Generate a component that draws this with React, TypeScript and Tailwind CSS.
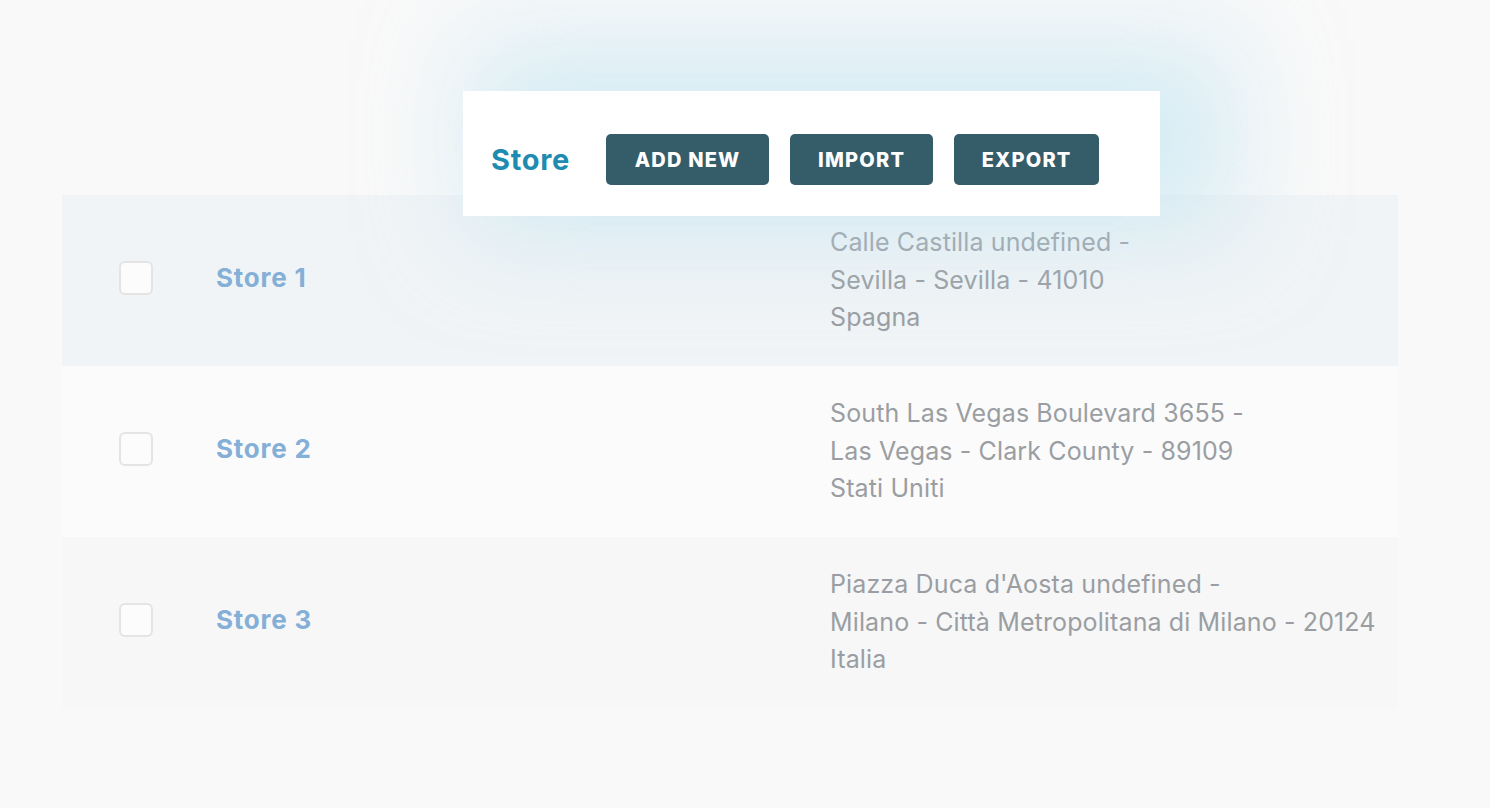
import React from "react";

const rows = [
  {
    name: "Store 1",
    lines: ["Calle Castilla undefined -", "Sevilla - Sevilla - 41010", "Spagna"],
    bg: "bg-[#f1f4f6]",
  },
  {
    name: "Store 2",
    lines: ["South Las Vegas Boulevard 3655 -", "Las Vegas - Clark County - 89109", "Stati Uniti"],
    bg: "bg-[#fbfbfb]",
  },
  {
    name: "Store 3",
    lines: ["Piazza Duca d'Aosta undefined -", "Milano - Città Metropolitana di Milano - 20124", "Italia"],
    bg: "bg-[#f7f7f7]",
  },
];

export default function App() {
  return (
    <div
      className="relative min-h-screen w-full overflow-hidden bg-[#f9f9f9]"
      style={{ fontFamily: "Inter, 'Liberation Sans', Arial, sans-serif" }}
    >
      <div className="ml-[62px] w-[1336px] pt-[195px]">
        {rows.map((r) => (
          <div key={r.name} className={`flex h-[171px] items-center ${r.bg}`}>
            <div className="mb-[6px] ml-[57px] h-[34px] w-[34px] rounded-[6px] border-2 border-[#e4e4e4] bg-[#fcfcfc]" />
            <div className="mb-[7px] ml-[63px] w-[614px] text-[26px] font-bold tracking-[0.03em] text-[#84afd6]">{r.name}</div>
            <div className="text-[25px] leading-[37.5px] tracking-[0.005em] text-[#9a9ea2]">
              {r.lines.map((l) => (
                <div key={l}>{l}</div>
              ))}
            </div>
          </div>
        ))}
      </div>

      <div className="absolute left-[463px] top-[91px] flex h-[125px] w-[697px] items-center bg-white pl-[28px] pt-[12px] shadow-[40px_-15px_100px_35px_rgba(185,226,240,0.55)]">
        <span className="mr-[36px] text-[29px] font-bold tracking-[0.025em] text-[#1f8bb0]">Store</span>
        <div className="flex gap-[21px]">
          {["ADD NEW", "IMPORT", "EXPORT"].map((b, i) => (
            <button
              key={b}
              className={`flex h-[51px] items-center justify-center rounded-[5px] bg-[#355c69] text-[20px] font-extrabold tracking-[0.06em] text-white ${
                i === 0 ? "w-[163px]" : i === 1 ? "w-[143px]" : "w-[145px]"
              }`}
            >
              {b}
            </button>
          ))}
        </div>
      </div>
    </div>
  );
}
